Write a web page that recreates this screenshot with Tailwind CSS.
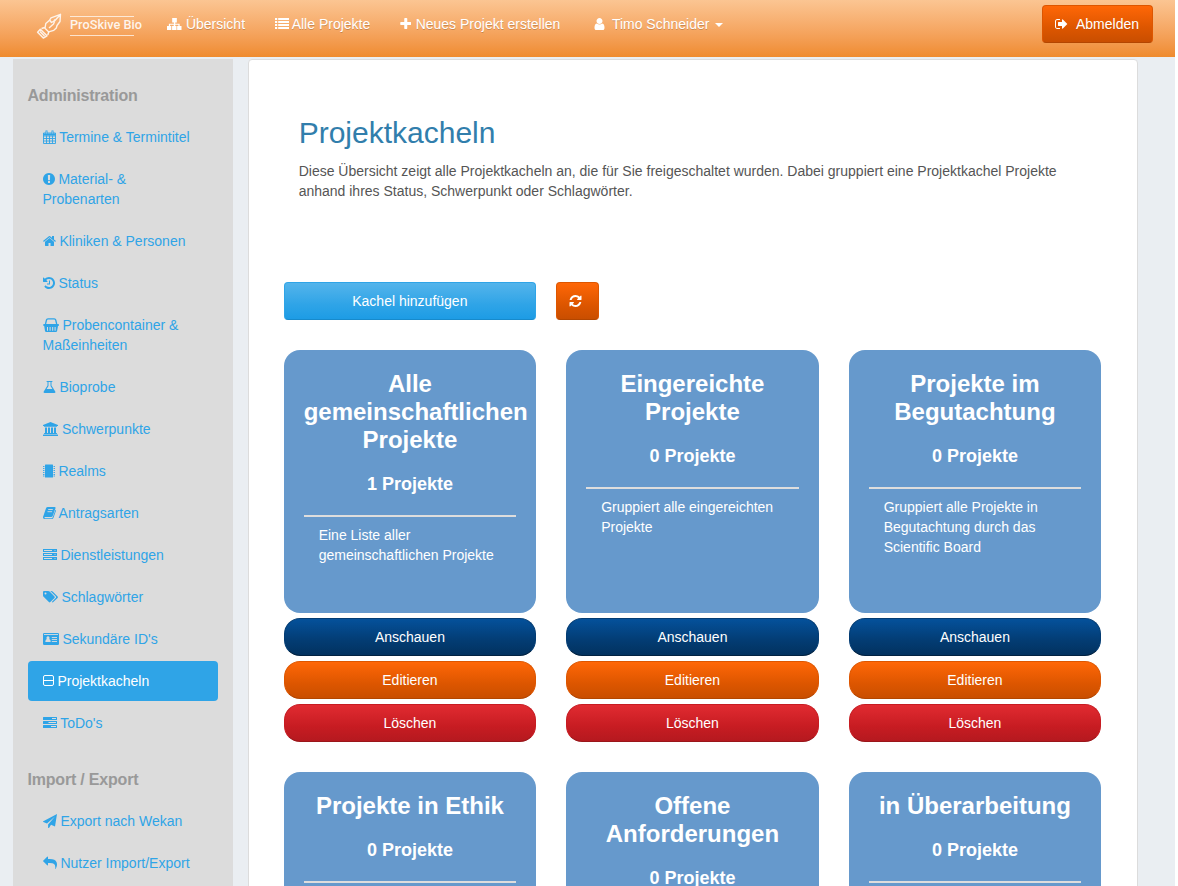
<!DOCTYPE html>
<html lang="de">
<head>
<meta charset="utf-8">
<title>ProSkive Bio – Projektkacheln</title>
<script src="https://cdn.jsdelivr.net/npm/@tailwindcss/browser@4"></script>
</head>
<body class="h-[886px] overflow-hidden bg-white font-['Liberation_Sans',Arial,sans-serif] text-[14px] leading-5 text-[#555]">
<div class="flex h-[886px] w-[1175px] flex-col overflow-hidden bg-[#eaeef2]">

<header class="flex h-[57px] shrink-0 items-start bg-linear-to-b from-[#fbc592] to-[#ef8b2d] text-white">
  <a class="ml-[34px] mt-[10px] block h-[32px] w-[118px]">
    <svg class="block" width="118" height="32" viewBox="34 10 118 32" fill="none" stroke="#fff" stroke-opacity=".85">
      <path stroke-width="1.4" stroke-linejoin="round" d="M60.500 14.300L51 17.800L49.300 20.500L45.800 23.500L45 28.300L48.500 31.800L53.800 30.300L56.300 28L57 25.500L60 21.500ZM60 15L54.500 21M50 20.500L51.500 22.500L54 21L55 19.500M54.500 21.500L53.500 24L49 28"/>
      <path stroke-width="1.500" stroke-linejoin="round" d="M40.300 29.300L47 35.800L43.300 38L37.600 32.200ZM41.500 28.500L44.800 27.500M47.800 35L48.800 31.800M40 31.500L44.500 36"/>
      <path stroke-width="1" stroke-opacity=".7" d="M70 16.500H134M70 35.500H134"/>
      <text x="70" y="28.900" textLength="72" lengthAdjust="spacingAndGlyphs" fill="#fff" fill-opacity=".88" stroke="none" font-family="Roboto, sans-serif" font-weight="500" font-size="12.500">ProSkive Bio</text>
    </svg>
  </a>
  <nav class="ml-[15px] mt-[14px] flex gap-[29.500px] [text-shadow:0_1px_0_rgba(0,0,0,.2)]">
    <a class="whitespace-nowrap"><svg class="mr-[.5px] inline align-[-2px]" width="14.500" height="14" viewBox="0 0 14 14" preserveAspectRatio="none" fill="currentColor"><path d="M5 1h4.500v4.500H8v1.200h4.200V9H14v4H9.800V9h1.200V7.800H8V9h1.200v4H4.900V9H6.500V7.800H3V9h1.200v4H0V9h1.800V6.700h4.900V5.500H5z"/></svg> Übersicht</a>
    <a class="whitespace-nowrap"><svg class="inline align-[-2px]" width="14" height="14" viewBox="0 0 14 14" fill="currentColor"><path d="M0 1h2.200v2H0zM3.200 1H14v2H3.200zM0 4h2.200v2H0zM3.200 4H14v2H3.200zM0 7h2.200v2H0zM3.200 7H14v2H3.200zM0 10h2.200v2H0zM3.200 10H14v2H3.200z"/></svg> Alle Projekte</a>
    <a class="whitespace-nowrap"><svg class="mr-[.5px] inline align-[-2px]" width="11.500" height="14" viewBox="192 0 1408 1792" fill="currentColor"><path d="M1600 736v192q0 40-28 68t-68 28h-416v416q0 40-28 68t-68 28h-192q-40 0-68-28t-28-68v-416h-416q-40 0-68-28t-28-68v-192q0-40 28-68t68-28h416v-416q0-40 28-68t68-28h192q40 0 68 28t28 68v416h416q40 0 68 28t28 68z"/></svg> Neues Projekt erstellen</a>
    <a class="flex pl-[4px]"><svg class="mt-[3px]" width="11" height="14" viewBox="256 0 1280 1792" fill="currentColor"><path d="M1536 1399q0 109-62.500 187t-150.500 78h-854q-88 0-150.500-78t-62.500-187q0-85 8.500-160.500t31.500-152 58.500-131 94-89 134.500-34.500q131 128 313 128t313-128q76 0 134.500 34.500t94 89 58.500 131 31.500 152 8.500 160.500zm-256-887q0 159-112.500 271.500t-271.500 112.500-271.500-112.500-112.500-271.500 112.500-271.500 271.500-112.500 271.500 112.500 112.500 271.500z"/></svg><span class="ml-[7px]">Timo Schneider</span><i class="ml-[6px] mt-[9px] h-0 w-0 border-x-4 border-t-4 border-x-transparent border-t-white"></i></a>
  </nav>
  <a class="ml-auto mr-[22px] mt-[5px] flex h-[38px] w-[111px] items-center rounded-[4px] border border-[#dd5600] border-b-[#b34600] bg-[linear-gradient(#ff6707,#dd5600_60%,#c94e00)] pl-[12px] [text-shadow:0_1px_0_rgba(0,0,0,.1)]"><svg class="mr-[8px]" width="13" height="14" viewBox="64 0 1664 1792" fill="currentColor"><path d="M704 1440q0 4 1 20t.5 26.500-3 23.500-10 19.500-20.500 6.500h-320q-119 0-203.500-84.500t-84.500-203.500v-704q0-119 84.500-203.500t203.500-84.500h320q13 0 22.500 9.500t9.500 22.500q0 4 1 20t.5 26.500-3 23.500-10 19.500-20.500 6.500h-320q-66 0-113 47t-47 113v704q0 66 47 113t113 47h312l11.500 1 11.500 3 8 5.500 7 9 2 13.500zm928-544q0 26-19 45l-544 544q-19 19-45 19t-45-19-19-45v-288h-448q-26 0-45-19t-19-45v-384q0-26 19-45t45-19h448v-288q0-26 19-45t45-19 45 19l544 544q19 19 19 45z"/></svg>Abmelden</a>
</header>

<div class="mt-[2px] flex min-h-0 grow items-start">
  <aside class="ml-[13px] h-[827px] w-[220px] shrink-0 overflow-hidden bg-[#dcdcdc] px-[15px] pt-[27px] text-[#2fa4e7]">
    <h4 class="-ml-[.5px] text-[16px] font-bold leading-5 tracking-[-.2px] text-[#999]">Administration</h4>
    <ul class="mt-[11px] flex flex-col gap-[2px]">
      <li class="px-[14.500px] py-[10px]"><svg class="inline align-[-2px]" width="13" height="14" viewBox="0 0 13 14" fill="none" stroke="currentColor"><path d="M.5 3h12v10.500H.5zM.5 6h12M.5 8.500h12M.5 11h12M3.500 5.500v8M6.500 5.500v8M9.500 5.500v8" stroke-width=".9"/><path d="M.5 3.500h12v2H.5z" fill="currentColor" stroke="none"/><path d="M3.500.5v3.500M9.500.5v3.500" stroke-width="2"/><path d="M3.500 1.200v2.500M9.500 1.200v2.500" stroke="#dcdcdc" stroke-width=".5"/></svg> Termine &amp; Termintitel</li>
      <li class="px-[14.500px] py-[10px]"><svg class="inline align-[-2px]" width="12" height="14" viewBox="128 0 1536 1792" fill="currentColor"><path d="M896 128q209 0 385.500 103t279.500 279.500 103 385.500-103 385.500-279.500 279.500-385.500 103-385.500-103-279.500-279.500-103-385.500 103-385.500 279.500-279.500 385.500-103zm128 1247v-190q0-14-9-23.500t-22-9.500h-192q-13 0-23 10t-10 23v190q0 13 10 23t23 10h192q13 0 22-9.500t9-23.500zm-2-344l18-621q0-12-10-18-10-8-24-8h-220q-14 0-24 8-10 6-10 18l17 621q0 10 10 17.500t24 7.500h185q14 0 23.500-7.500t10.500-17.500z"/></svg> Material- &amp;<br>Probenarten</li>
      <li class="px-[14.500px] py-[10px]"><svg class="inline align-[-2px]" width="13" height="14" viewBox="64 0 1664 1792" fill="currentColor"><path d="M1472 992v480q0 26-19 45t-45 19h-384v-384h-256v384h-384q-26 0-45-19t-19-45v-480q0-1 .5-3t.5-3l575-474 575 474q1 2 1 6zm223-69l-62 74q-8 9-21 11h-3q-13 0-21-7l-692-577-692 577q-12 8-24 7-13-2-21-11l-62-74q-8-10-7-23.500t11-21.500l719-599q32-26 76-26t76 26l244 204v-195q0-14 9-23t23-9h192q14 0 23 9t9 23v408l219 182q10 8 11 21.500t-7 23.500z"/></svg> Kliniken &amp; Personen</li>
      <li class="px-[14.500px] py-[10px]"><svg class="inline align-[-2px]" width="12" height="14" viewBox="128 0 1536 1792" fill="currentColor"><path d="M1664 896q0 156-61 298t-164 245-245 164-298 61q-172 0-327-72.500t-264-204.500q-7-10-6.500-22.500t8.500-20.500l137-138q10-9 25-9 16 2 23 12 73 95 179 147t225 52q104 0 198.500-40.500t163.500-109.500 109.500-163.500 40.500-198.500-40.500-198.500-109.500-163.500-163.500-109.500-198.500-40.500q-98 0-188 35.500t-160 101.500l137 138q31 30 14 69-17 40-59 40h-448q-26 0-45-19t-19-45v-448q0-42 40-59 39-17 69 14l130 129q107-101 244.500-156.500t284.500-55.500q156 0 298 61t245 164 164 245 61 298zm-640-288v448q0 14-9 23t-23 9h-320q-14 0-23-9t-9-23v-64q0-14 9-23t23-9h224v-352q0-14 9-23t23-9h64q14 0 23 9t9 23z"/></svg> Status</li>
      <li class="px-[14.500px] py-[10px]"><svg class="inline align-[-2px]" width="16" height="14" viewBox="0 0 16 14" fill="currentColor"><path fill-rule="evenodd" d="M1 6h14.200q.8 0 .8 1t-.8 1H15l-.9 5q-.2 1-1.200 1H3.200q-1 0-1.200-1L1.200 8H1Q.2 8 .2 7T1 6zM4 9v3.800h1V9zM6.600 9v3.800h1V9zM9.200 9v3.800h1V9zM11.600 9v3.800h1V9z"/><path d="M2.500 6l1-4q.2-1.200 1.500-1.200h6.200q1.300 0 1.500 1.200l1 4M6 .8h4.200" fill="none" stroke="currentColor" stroke-width="1.300"/></svg> Probencontainer &amp;<br>Maßeinheiten</li>
      <li class="px-[14.500px] py-[10px]"><svg class="inline align-[-2px]" width="13" height="14" viewBox="0 0 13 14" fill="currentColor"><path fill-rule="evenodd" d="M4 1h5q.5 0 .5.500T9 2h-.5v3.600l3.600 5.700q1 1.700-.9 1.700H1.800Q-.1 13 .9 11.300l3.600-5.700V2H4q-.5 0-.5-.5T4 1zM5.500 2v3.900L3.600 9h5.800L7.500 5.900V2z"/></svg> Bioprobe</li>
      <li class="px-[14.500px] py-[10px]"><svg class="mr-[.5px] inline align-[-2px]" width="15" height="14" viewBox="0 0 15 14" fill="currentColor"><path d="M7.500 0L15 3v1h-1v.8H1V4H0V3zM2 5.500h2V11h1V5.500h2V11h1V5.500h2V11h1V5.500h2V11h.5q.5 0 .5.500v.500H1v-.500q0-.5.500-.5H2zM.5 12.500h14q.5 0 .5.500v1H0v-1q0-.5.5-.5z"/></svg> Schwerpunkte</li>
      <li class="px-[14.500px] py-[10px]"><svg class="inline align-[-2px]" width="12" height="14" viewBox="0 0 12 14" fill="currentColor"><path d="M2.500.5h7q.5 0 .5.500v12q0 .5-.5.500h-7q-.5 0-.5-.5V1q0-.5.5-.5z"/><path d="M0 2.500h1.500M0 4.500h1.500M0 6.500h1.500M0 8.500h1.500M0 10.500h1.500M0 12h1.500M10.500 2.500H12M10.500 4.500H12M10.500 6.500H12M10.500 8.500H12M10.500 10.500H12M10.500 12H12" stroke="currentColor" stroke-width=".9"/></svg> Realms</li>
      <li class="px-[14.500px] py-[10px]"><svg class="inline align-[-2px]" width="13" height="14" viewBox="0 0 13 14"><path fill="currentColor" d="M4.800 1h6.800q1.300 0 .9 1.300L9.700 10q-.4 1-1.500 1H2q-.7 0-.6.600 0 .6.800.6h6.600q.5 0 .8-.7l2.900-7.800q.7.400.4 1.300l-2.500 7q-.4 1-1.400 1H2Q-.4 13 .1 10.800L3 2.300Q3.500 1 4.800 1z"/><path d="M5.200 3.500h4.600M4.500 5.700h4.600" stroke="#dcdcdc" stroke-width=".9"/></svg> Antragsarten</li>
      <li class="px-[14.500px] py-[10px]"><svg class="inline align-[-2px]" width="14" height="14" viewBox="0 0 14 14"><path fill="currentColor" d="M0 1h14v3H0zM0 5h14v3H0zM0 9h14v3H0z"/><path d="M1 2.500h8M1 6.500h8M1 10.500h8" stroke="#dcdcdc"/><path d="M11.500 2.500h1M11.500 6.500h1M11.500 10.500h1" stroke="#dcdcdc" stroke-width=".8"/></svg> Dienstleistungen</li>
      <li class="px-[14.500px] py-[10px]"><svg class="inline align-[-2px]" width="15" height="14" viewBox="0 0 15 14" fill="currentColor"><path fill-rule="evenodd" d="M1 1h4.200q.8 0 1.400.6l4.900 4.900q.6.700 0 1.400l-4.200 4.200q-.7.600-1.400 0L.6 6.800Q0 6.300 0 5.300V2q0-1 1-1zM2.500 2.500a1 1 0 1 0 0 2 1 1 0 0 0 0-2z"/><path d="M7.200 1h1q.8 0 1.400.6l5 4.900q.6.700 0 1.400l-4.300 4.200q-.8.700-1.500-.1l3.900-4q.8-.8 0-1.700L7.800 1.500z"/></svg> Schlagwörter</li>
      <li class="px-[14.500px] py-[10px]"><svg class="inline align-[-2px]" width="16" height="14" viewBox="0 0 16 14"><path fill="currentColor" d="M1.200 1h13.600Q16 1 16 2.200v9.600Q16 13 14.800 13H1.200Q0 13 0 11.800V2.200Q0 1 1.200 1z"/><path d="M1 2.500h14M8.800 5.500H14M8.800 7.500H14M8.800 9.500H14" stroke="#dcdcdc" stroke-width=".9"/><path fill="#dcdcdc" d="M5 4.300a1.600 1.600 0 0 1 1.200 2.600Q7.700 7.300 7.700 10H2.300q0-2.700 1.500-3.100A1.600 1.600 0 0 1 5 4.300z"/></svg> Sekundäre ID's</li>
      <li class="rounded-[4px] bg-[#2fa4e7] px-[14.500px] py-[10px] text-white"><svg class="inline align-[-2px]" width="11" height="14" viewBox="0 0 11 14" fill="none" stroke="currentColor"><rect x=".5" y="1.500" width="10" height="10" rx="1.500"/><path d="M1 6.500h9"/></svg> Projektkacheln</li>
      <li class="px-[14.500px] py-[10px]"><svg class="inline align-[-2px]" width="14" height="14" viewBox="0 0 14 14"><path fill="currentColor" d="M.5 1h13q.5 0 .5.500v2q0 .5-.5.500H.5Q0 4 0 3.500v-2Q0 1 .5 1zM.5 5h13q.5 0 .5.500v2q0 .5-.5.500H.5Q0 8 0 7.500v-2Q0 5 .5 5zM.5 9h13q.5 0 .5.500v2q0 .5-.5.500H.5Q0 12 0 11.500v-2Q0 9 .5 9z"/><path d="M9 2.500h4M5.500 6.500H13M8 10.500h5" stroke="#dcdcdc"/></svg> ToDo's</li>
    </ul>
    <h4 class="-ml-[.5px] mt-[27px] text-[16px] font-bold leading-5 tracking-[-.2px] text-[#999]">Import / Export</h4>
    <ul class="mt-[11px] flex flex-col gap-[2px]">
      <li class="px-[14.500px] py-[10px]"><svg class="inline align-[-2px]" width="14" height="14" viewBox="0 0 14 14" fill="currentColor"><path d="M14 0l-2 12.400-4-1.700L6 14q-.7.300-.9-.4v-3.100L12 2.500l-8 7L.3 8.100q-.6-.4 0-.9z"/></svg> Export nach Wekan</li>
      <li class="px-[14.500px] py-[10px]"><svg class="inline align-[-2px]" width="14" height="14" viewBox="0 0 1792 1792" fill="currentColor"><path d="M1792 1120q0 166-127 451-24 60-37 76-12 17-28 17-32-4-32-35 0-9 5-50 5-68 5-123 0-315-164-444-133-116-550-116h-224v256q0 26-19 45t-45 19-45-19l-512-512q-19-19-19-45t19-45l512-512q19-19 45-19t45 19 19 45v256h224q713 0 875 403 53 134 53 333z"/></svg> Nutzer Import/Export</li>
    </ul>
  </aside>

  <main class="ml-[15px] h-[900px] w-[890px] shrink-0 rounded-[4px] border border-[#dcdcdc] bg-white px-[34.660px] pt-[54px]">
    <div class="px-[15px]">
      <h2 class="text-[30px] leading-[38px] text-[#317eac]">Projektkacheln</h2>
      <p class="mt-[9px] w-[770px]">Diese Übersicht zeigt alle Projektkacheln an, die für Sie freigeschaltet wurden. Dabei gruppiert eine Projektkachel Projekte anhand ihres Status, Schwerpunkt oder Schlagwörter.</p>
    </div>
    <div class="mt-[81px] flex gap-[20px] text-white [text-shadow:0_1px_0_rgba(0,0,0,.1)]">
      <button class="h-[38px] w-[252.330px] rounded-[4px] border border-[#2fa4e7] border-b-[#178acc] bg-[linear-gradient(#54b4eb,#2fa4e7_60%,#1d9ce5)]">Kachel hinzufügen</button>
      <button class="flex h-[38px] w-[43px] items-center justify-center rounded-[4px] border border-[#dd5600] border-b-[#b34600] bg-[linear-gradient(#ff6707,#dd5600_60%,#c94e00)] pr-[4px]"><svg width="13" height="14" viewBox="128 0 1536 1792" fill="currentColor"><path d="M1639 1056q0 5-1 7-64 268-268 434.500t-478 166.500q-146 0-282.500-55t-243.500-157l-129 129q-19 19-45 19t-45-19-19-45v-448q0-26 19-45t45-19h448q26 0 45 19t19 45-19 45l-137 137q71 66 161 102t187 36q134 0 250-65t186-179q11-17 53-117 8-23 30-23h192q13 0 22.500 9.500t9.500 22.500zm25-800v448q0 26-19 45t-45 19h-448q-26 0-45-19t-19-45 19-45l138-138q-148-137-349-137-134 0-250 65t-186 179q-11 17-53 117-8 23-30 23h-199q-13 0-22.500-9.500t-9.500-22.500v-7q65-268 270-434.500t480-166.500q146 0 284 55.500t245 156.500l130-129q19-19 45-19t45 19 19 45z"/></svg></button>
    </div>

    <div class="mt-[30px] grid w-[817.500px] grid-cols-3 gap-[30px] text-white">
      <section class="flex flex-col gap-[5px]">
        <div class="h-[263px] rounded-[16px] bg-[#6699cc] p-[20px]">
          <h3 class="text-center text-[24px] font-bold leading-7">Alle gemeinschaftlichen Projekte</h3>
          <p class="mt-[20px] text-center text-[18px] font-bold leading-5">1 Projekte</p>
          <hr class="mt-[21px] border-t-2 border-[#ddd]">
          <p class="mt-[8px] px-[15px]">Eine Liste aller gemeinschaftlichen Projekte</p>
        </div>
        <button class="h-[38px] rounded-[16px] border border-[#033c73] border-b-[#022241] bg-[linear-gradient(#04519b,#033c73_60%,#02325f)]">Anschauen</button>
        <button class="h-[38px] rounded-[16px] border border-[#dd5600] border-b-[#b34600] bg-[linear-gradient(#ff6707,#dd5600_60%,#c94e00)]">Editieren</button>
        <button class="h-[38px] rounded-[16px] border border-[#c71c22] border-b-[#9a161a] bg-[linear-gradient(#e12b31,#c71c22_60%,#b5191f)]">Löschen</button>
      </section>
      <section class="flex flex-col gap-[5px]">
        <div class="h-[263px] rounded-[16px] bg-[#6699cc] p-[20px]">
          <h3 class="text-center text-[24px] font-bold leading-7">Eingereichte Projekte</h3>
          <p class="mt-[20px] text-center text-[18px] font-bold leading-5">0 Projekte</p>
          <hr class="mt-[21px] border-t-2 border-[#ddd]">
          <p class="mt-[8px] px-[15px]">Gruppiert alle eingereichten Projekte</p>
        </div>
        <button class="h-[38px] rounded-[16px] border border-[#033c73] border-b-[#022241] bg-[linear-gradient(#04519b,#033c73_60%,#02325f)]">Anschauen</button>
        <button class="h-[38px] rounded-[16px] border border-[#dd5600] border-b-[#b34600] bg-[linear-gradient(#ff6707,#dd5600_60%,#c94e00)]">Editieren</button>
        <button class="h-[38px] rounded-[16px] border border-[#c71c22] border-b-[#9a161a] bg-[linear-gradient(#e12b31,#c71c22_60%,#b5191f)]">Löschen</button>
      </section>
      <section class="flex flex-col gap-[5px]">
        <div class="h-[263px] rounded-[16px] bg-[#6699cc] p-[20px]">
          <h3 class="text-center text-[24px] font-bold leading-7">Projekte im Begutachtung</h3>
          <p class="mt-[20px] text-center text-[18px] font-bold leading-5">0 Projekte</p>
          <hr class="mt-[21px] border-t-2 border-[#ddd]">
          <p class="mt-[8px] px-[15px]">Gruppiert alle Projekte in Begutachtung durch das Scientific Board</p>
        </div>
        <button class="h-[38px] rounded-[16px] border border-[#033c73] border-b-[#022241] bg-[linear-gradient(#04519b,#033c73_60%,#02325f)]">Anschauen</button>
        <button class="h-[38px] rounded-[16px] border border-[#dd5600] border-b-[#b34600] bg-[linear-gradient(#ff6707,#dd5600_60%,#c94e00)]">Editieren</button>
        <button class="h-[38px] rounded-[16px] border border-[#c71c22] border-b-[#9a161a] bg-[linear-gradient(#e12b31,#c71c22_60%,#b5191f)]">Löschen</button>
      </section>
      <section class="h-[263px] rounded-[16px] bg-[#6699cc] p-[20px]">
        <h3 class="text-center text-[24px] font-bold leading-7">Projekte in Ethik</h3>
        <p class="mt-[20px] text-center text-[18px] font-bold leading-5">0 Projekte</p>
        <hr class="mt-[21px] border-t-2 border-[#ddd]">
      </section>
      <section class="h-[263px] rounded-[16px] bg-[#6699cc] p-[20px]">
        <h3 class="text-center text-[24px] font-bold leading-7">Offene Anforderungen</h3>
        <p class="mt-[20px] text-center text-[18px] font-bold leading-5">0 Projekte</p>
        <hr class="mt-[21px] border-t-2 border-[#ddd]">
      </section>
      <section class="h-[263px] rounded-[16px] bg-[#6699cc] p-[20px]">
        <h3 class="text-center text-[24px] font-bold leading-7">in Überarbeitung</h3>
        <p class="mt-[20px] text-center text-[18px] font-bold leading-5">0 Projekte</p>
        <hr class="mt-[21px] border-t-2 border-[#ddd]">
      </section>
    </div>
  </main>
</div>
</div>
</body>
</html>
